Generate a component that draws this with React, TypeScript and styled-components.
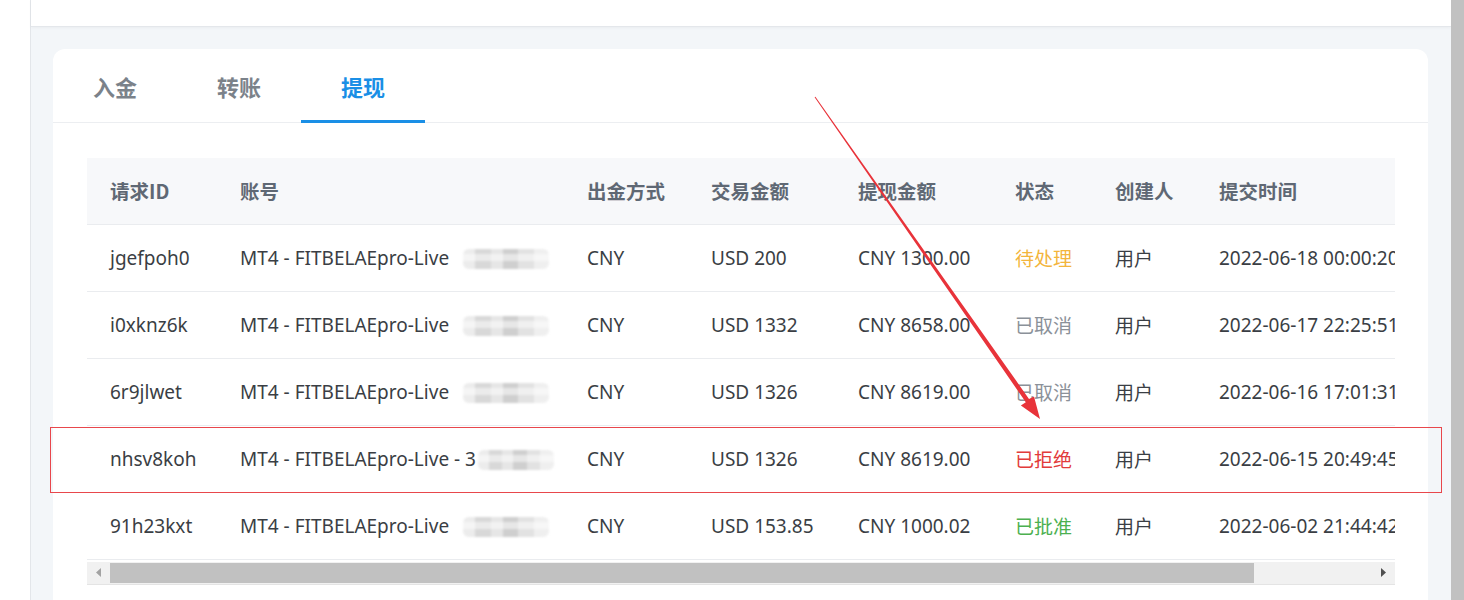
import React from "react";
import styled, { createGlobalStyle, css } from "styled-components";

const GlobalStyle = createGlobalStyle`
  html, body { margin: 0; padding: 0; }
  body {
    font-family: "Noto Sans", "Noto Sans CJK SC", sans-serif;
    background: #ffffff;
  }
  * { box-sizing: border-box; }
`;

const Shell = styled.div`
  position: relative;
  display: flex;
  width: 1464px;
  height: 600px;
  overflow: hidden;
`;

const Sidebar = styled.aside`
  flex: 0 0 31px;
  background: #ffffff;
  border-right: 1px solid #e3e6ea;
`;

const Main = styled.main`
  flex: 1;
  display: flex;
  flex-direction: column;
  background: #f3f6f9;
  min-width: 0;
`;

const PageScrollbar = styled.div`
  flex: 0 0 13px;
  background: #c1c1c1;
`;

const TopStrip = styled.div`
  flex: 0 0 27px;
  background: #ffffff;
  border-bottom: 1px solid #e4e7eb;
  box-shadow: 0 1px 3px rgba(0, 0, 0, 0.04);
`;

const Content = styled.div`
  padding: 22px 23px 0 22px;
`;

const Card = styled.section`
  background: #ffffff;
  border-radius: 12px;
  padding: 0 0 60px;
`;

const Tabs = styled.nav`
  display: flex;
  height: 74px;
  border-bottom: 1px solid #eceef1;
`;

const Tab = styled.div<{ $active?: boolean }>`
  position: relative;
  width: 124px;
  display: flex;
  align-items: center;
  justify-content: center;
  padding-top: 1px;
  font-family: "Noto Sans CJK SC", sans-serif;
  font-size: 22px;
  font-weight: 700;
  color: ${(p) => (p.$active ? "#1a8fe6" : "#7b828a")};
  ${(p) =>
    p.$active &&
    css`
      &::after {
        content: "";
        position: absolute;
        left: 0;
        right: 0;
        bottom: -1px;
        height: 3px;
        background: #1a8fe6;
      }
    `}
`;

const TableArea = styled.div`
  margin: 35px 33px 0 34px;
`;

const TableClip = styled.div`
  overflow: hidden;
`;

const Table = styled.table`
  width: 1442px;
  border-collapse: collapse;
  table-layout: fixed;
  font-family: "Noto Sans", "Noto Sans CJK SC", sans-serif;
  font-size: 19px;
`;

const Th = styled.th`
  height: 66px;
  padding: 0 0 0 23px;
  text-align: left;
  white-space: nowrap;
  background: #f7f8fa;
  border-bottom: 1px solid #eaecef;
  font-family: "Noto Sans CJK SC", sans-serif;
  font-weight: 700;
  font-size: 19.5px;
  color: #5f6874;
`;

const Td = styled.td`
  height: 67px;
  padding: 0 0 0 23px;
  white-space: nowrap;
  overflow: hidden;
  border-bottom: 1px solid #eaecef;
  color: #3a3e44;
`;

type Tone = "pending" | "cancelled" | "rejected" | "approved";

const toneColor: Record<Tone, string> = {
  pending: "#f3b53c",
  cancelled: "#8b9199",
  rejected: "#e23b3b",
  approved: "#4cb050",
};

const Status = styled.span<{ $tone: Tone }>`
  font-family: "Noto Sans CJK SC", sans-serif;
  color: ${(p) => toneColor[p.$tone]};
`;

const Cjk = styled.span`
  font-family: "Noto Sans CJK SC", sans-serif;
`;

const Redact = styled.span<{ $tight?: boolean }>`
  display: inline-block;
  vertical-align: middle;
  width: ${(p) => (p.$tight ? "76px" : "86px")};
  height: 20px;
  margin-left: ${(p) => (p.$tight ? "2px" : "14px")};
  border-radius: 6px;
  background:
    linear-gradient(180deg, transparent 0 25%, rgba(255,255,255,0.5) 25% 60%, transparent 60%),
    linear-gradient(90deg, #ececec 0 14%, #d8d8d8 14% 32%, #e6e6e6 32% 46%, #cfcfcf 46% 64%, #e2e2e2 64% 82%, #efefef 82% 100%);
  filter: blur(1.2px);
`;

const ScrollBar = styled.div`
  display: flex;
  height: 23px;
  background: #f1f1f1;
  border-bottom: 1px solid #e4e4e4;
  margin-top: 2px;
`;

const ScrollButton = styled.div`
  flex: 0 0 23px;
  display: flex;
  align-items: center;
  justify-content: center;
`;

const ScrollTrack = styled.div`
  flex: 1;
  display: flex;
  align-items: center;
`;

const ScrollThumb = styled.div`
  height: 20px;
  background: #c1c1c1;
`;

const Overlay = styled.svg`
  position: absolute;
  left: 0;
  top: 0;
  pointer-events: none;
`;

const cols = [130, 347, 124, 147, 157, 100, 104, 333];
const heads = ["请求ID", "账号", "出金方式", "交易金额", "提现金额", "状态", "创建人", "提交时间"];

const rows: {
  id: string;
  trade: string;
  amount: string;
  status: string;
  tone: Tone;
  time: string;
  dash?: boolean;
}[] = [
  { id: "jgefpoh0", trade: "USD 200", amount: "CNY 1300.00", status: "待处理", tone: "pending", time: "2022-06-18 00:00:20" },
  { id: "i0xknz6k", trade: "USD 1332", amount: "CNY 8658.00", status: "已取消", tone: "cancelled", time: "2022-06-17 22:25:51" },
  { id: "6r9jlwet", trade: "USD 1326", amount: "CNY 8619.00", status: "已取消", tone: "cancelled", time: "2022-06-16 17:01:31" },
  { id: "nhsv8koh", trade: "USD 1326", amount: "CNY 8619.00", status: "已拒绝", tone: "rejected", time: "2022-06-15 20:49:45", dash: true },
  { id: "91h23kxt", trade: "USD 153.85", amount: "CNY 1000.02", status: "已批准", tone: "approved", time: "2022-06-02 21:44:42" },
];

export default function App() {
  return (
    <>
      <GlobalStyle />
      <Shell>
        <Sidebar />
        <Main>
          <TopStrip />
          <Content>
            <Card>
              <Tabs>
                <Tab>入金</Tab>
                <Tab>转账</Tab>
                <Tab $active>提现</Tab>
              </Tabs>
              <TableArea>
                <TableClip>
                  <Table>
                    <colgroup>
                      {cols.map((w, i) => (
                        <col key={i} style={{ width: w }} />
                      ))}
                    </colgroup>
                    <thead>
                      <tr>
                        {heads.map((h) => (
                          <Th key={h}>{h}</Th>
                        ))}
                      </tr>
                    </thead>
                    <tbody>
                      {rows.map((r) => (
                        <tr key={r.id}>
                          <Td>{r.id}</Td>
                          <Td>
                            MT4 - FITBELAEpro-Live{r.dash ? " - 3" : ""}
                            <Redact $tight={r.dash} />
                          </Td>
                          <Td>CNY</Td>
                          <Td>{r.trade}</Td>
                          <Td>{r.amount}</Td>
                          <Td>
                            <Status $tone={r.tone}>{r.status}</Status>
                          </Td>
                          <Td>
                            <Cjk>用户</Cjk>
                          </Td>
                          <Td>{r.time}</Td>
                        </tr>
                      ))}
                    </tbody>
                  </Table>
                </TableClip>
                <ScrollBar>
                  <ScrollButton>
                    <svg width="5" height="9" viewBox="0 0 5 9">
                      <polygon points="5,0 0,4.5 5,9" fill="#a3a3a3" />
                    </svg>
                  </ScrollButton>
                  <ScrollTrack>
                    <ScrollThumb style={{ width: 1144 }} />
                  </ScrollTrack>
                  <ScrollButton>
                    <svg width="5" height="9" viewBox="0 0 5 9">
                      <polygon points="0,0 5,4.5 0,9" fill="#505050" />
                    </svg>
                  </ScrollButton>
                </ScrollBar>
              </TableArea>
            </Card>
          </Content>
        </Main>
        <PageScrollbar />
        <Overlay width="1464" height="600" viewBox="0 0 1464 600">
          <rect x="50.5" y="427.5" width="1391" height="65" fill="none" stroke="#e8474c" strokeWidth="1" />
          <polygon
            points="814.6,97.3 1025.8,402.2 1020.9,405.6 1040,419 1034,396.4 1029,398.9 815.4,96.7"
            fill="#e8333a"
          />
        </Overlay>
      </Shell>
    </>
  );
}
